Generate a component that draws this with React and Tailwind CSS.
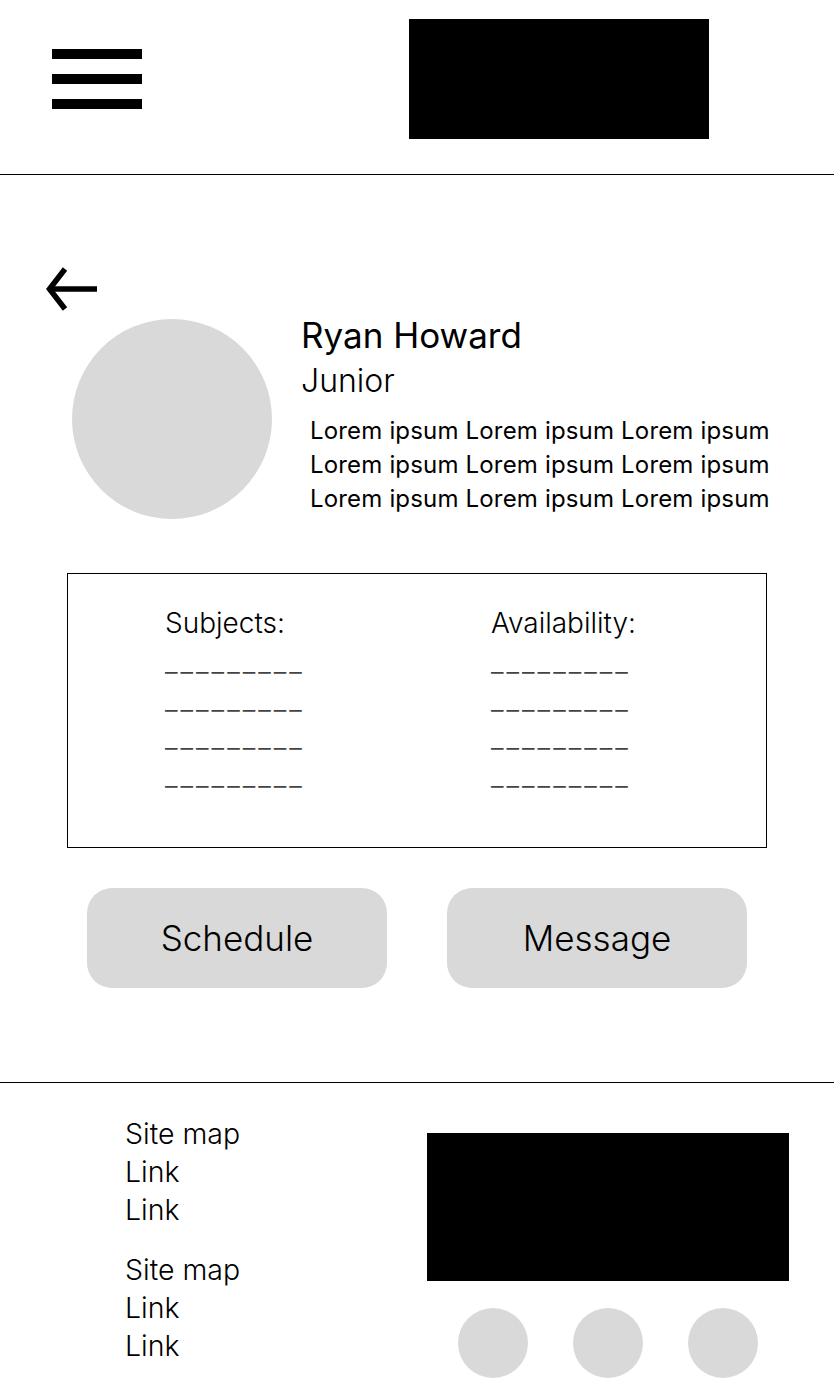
const lines = [1, 2, 3, 4];

const Header = () => (
  <header className="flex h-[175px] items-start border-b border-black pl-[52px]">
    <div className="mt-[49px] flex w-[90px] flex-col gap-[15px]">
      <div className="h-[10px] bg-black" />
      <div className="h-[10px] bg-black" />
      <div className="h-[10px] bg-black" />
    </div>
    <div className="ml-[267px] mt-[19px] h-[120px] w-[300px] bg-black" />
  </header>
);

const Profile = () => (
  <section className="pt-[91px]">
    <div className="pl-[45px]">
      <svg width="54" height="46" viewBox="0 0 54 46" fill="none" stroke="black" strokeWidth="5.5">
        <path d="M5 23 H52" />
        <path d="M20 3 L4.5 23 L20 43" />
      </svg>
    </div>
    <div className="mt-[7px] flex items-start">
      <div className="ml-[72px] h-[200px] w-[200px] rounded-full bg-[#d9d9d9]" />
      <div className="ml-[29px] -mt-[5px]">
        <h1 className="text-[35px] leading-[42px] text-black">Ryan Howard</h1>
        <p className="mt-[5px] text-[32px] font-light leading-[40px] text-black">Junior</p>
        <p className="ml-[9px] mt-[13px] w-[480px] text-[24px] leading-[34px] tracking-[0.17px] text-black">
          Lorem ipsum Lorem ipsum Lorem ipsum<br />
          Lorem ipsum Lorem ipsum Lorem ipsum<br />
          Lorem ipsum Lorem ipsum Lorem ipsum
        </p>
      </div>
    </div>
  </section>
);

const InfoBox = () => (
  <div className="ml-[67px] mt-[54px] h-[275px] w-[700px] border border-black pl-[97px] pt-[29px]">
    <div className="grid grid-cols-[326px_1fr] text-[28px] font-light text-black">
      {['Subjects:', 'Availability:'].map((title) => (
        <div key={title}>
          <p className="leading-[40px]">{title}</p>
          <div>
            {lines.map((n) => (
              <p key={n} className="leading-[38px] tracking-[3px] text-[#444]">_________</p>
            ))}
          </div>
        </div>
      ))}
    </div>
  </div>
);

const Actions = () => (
  <div className="ml-[87px] mt-[40px] flex gap-[60px]">
    <button className="h-[100px] w-[300px] rounded-[25px] bg-[#d9d9d9] text-[35px] font-light text-black">
      Schedule
    </button>
    <button className="h-[100px] w-[300px] rounded-[25px] bg-[#d9d9d9] text-[35px] font-light text-black">
      Message
    </button>
  </div>
);

const Footer = () => (
  <footer className="mt-[94px] flex border-t border-black pl-[125px] pt-[32px] text-black">
    <div className="w-[302px] text-[28.5px] font-light leading-[38px]">
      <p>Site map</p>
      <p>Link</p>
      <p>Link</p>
      <p className="mt-[22px]">Site map</p>
      <p>Link</p>
      <p>Link</p>
    </div>
    <div className="pt-[18px]">
      <div className="h-[148px] w-[362px] bg-black" />
      <div className="mt-[27px] flex justify-center gap-[45px] pr-[1px]">
        <div className="h-[70px] w-[70px] rounded-full bg-[#d9d9d9]" />
        <div className="h-[70px] w-[70px] rounded-full bg-[#d9d9d9]" />
        <div className="h-[70px] w-[70px] rounded-full bg-[#d9d9d9]" />
      </div>
    </div>
  </footer>
);

export default function App() {
  return (
    <div className="min-h-[1400px] w-[834px] bg-white font-['Inter',sans-serif]">
      <Header />
      <Profile />
      <InfoBox />
      <Actions />
      <Footer />
    </div>
  );
}
